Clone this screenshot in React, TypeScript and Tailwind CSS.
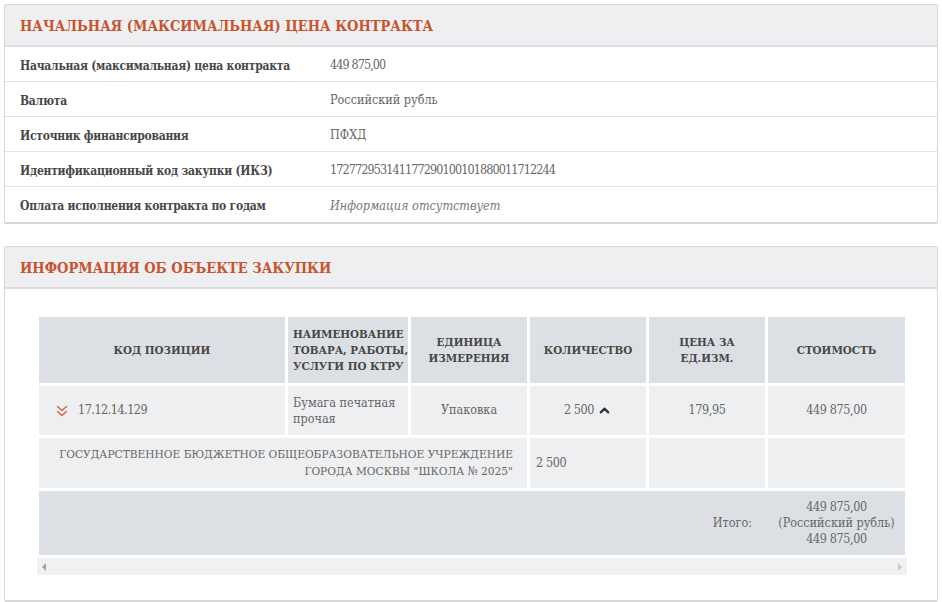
import { ChevronUp } from 'lucide-react';

const font = 'font-["DejaVu_Serif_Condensed","DejaVu_Serif",serif]';

const infoRows = [
  { label: 'Начальная (максимальная) цена контракта', value: '449 875,00', num: true },
  { label: 'Валюта', value: 'Российский рубль' },
  { label: 'Источник финансирования', value: 'ПФХД' },
  { label: 'Идентификационный код закупки (ИКЗ)', value: '172772953141177290100101880011712244', num: true },
  { label: 'Оплата исполнения контракта по годам', value: 'Информация отсутствует', muted: true }
];

function CardHeader({ title }: { title: string }) {
  return (
    <div className="flex h-[42px] items-center border-b-2 border-[#dcdde0] bg-[#eeeff1] px-[15px] pt-[2px]">
      <h2 className="text-[14.5px] font-bold uppercase text-[#c8542d]">{title}</h2>
    </div>
  );
}

function IconExpand() {
  return (
    <svg width="12" height="12" viewBox="0 0 12 12" aria-hidden="true">
      <path
        d="M1.5 1.5L6 5.5l4.5-4M1.5 6.5L6 10.5l4.5-4"
        stroke="#d0643c"
        strokeWidth="1.4"
        fill="none"
        strokeLinecap="round"
        strokeLinejoin="round"
      />
    </svg>
  );
}

const th = 'flex h-[66px] items-center justify-center whitespace-nowrap bg-[#dce0e4] text-center text-[11.5px] font-bold uppercase leading-[16px] text-[#474747]';
const td = 'flex items-center justify-center bg-[#eeeff1]';

export default function App() {
  return (
    <div className={`min-h-[602px] w-[942px] bg-white px-[4px] pt-[4px] text-[#555] ${font}`}>
      <section className="rounded-[2px] border border-b-2 border-[#d6d7d9]">
        <CardHeader title="Начальная (максимальная) цена контракта" />
        {infoRows.map((row, i) => (
          <div
            key={row.label}
            className={`flex h-[35px] items-center pt-[3px] text-[12.5px] ${i < infoRows.length - 1 ? 'border-b border-[#e2e3e5]' : ''}`}
          >
            <div className="w-[325px] pl-[15px] text-[12px] font-bold tracking-[-0.25px] text-[#474747]">{row.label}</div>
            <div
              className={
                row.muted
                  ? 'italic text-[#777]'
                  : row.num
                    ? 'tracking-[-0.9px] text-[#666]'
                    : 'text-[#666]'
              }
            >
              {row.value}
            </div>
          </div>
        ))}
      </section>

      <section className="mt-[22px] rounded-[2px] border border-b-2 border-[#d6d7d9] pb-[25px]">
        <CardHeader title="Информация об объекте закупки" />
        <div className="pl-[32px] pr-[32px] pt-[28px]">
          <div className="overflow-hidden">
            <div className="grid grid-cols-[246px_120px_116px_116px_116px_137px] gap-[3px] pl-[2px] text-[12.5px] text-[#666]">
              {/* header */}
              <div className={th}>Код позиции</div>
              <div className={`${th} justify-start px-[5px] text-left`}>
                <span>
                  Наименование
                  <br />
                  товара, работы,
                  <br />
                  услуги по КТРУ
                </span>
              </div>
              <div className={th}>
                <span>
                  Единица
                  <br />
                  измерения
                </span>
              </div>
              <div className={th}>Количество</div>
              <div className={th}>
                <span>
                  Цена за
                  <br />
                  ед.изм.
                </span>
              </div>
              <div className={th}>Стоимость</div>

              {/* row 1 */}
              <div className="flex h-[49px] items-center gap-[10px] bg-[#eeeff1] pl-[17px]">
                <IconExpand />
                <span className="tracking-[-0.5px]">17.12.14.129</span>
              </div>
              <div className="flex h-[49px] items-center bg-[#eeeff1] px-[5px] leading-[16px]">
                Бумага печатная прочая
              </div>
              <div className={`${td} h-[49px]`}>Упаковка</div>
              <div className={`${td} h-[49px] gap-[3px]`}>
                <span className="tracking-[-0.4px]">2 500</span>
                <ChevronUp size={15} strokeWidth={3.5} className="text-[#333]" />
              </div>
              <div className={`${td} h-[49px] tracking-[-0.4px]`}>179,95</div>
              <div className={`${td} h-[49px] tracking-[-0.4px]`}>449 875,00</div>

              {/* row 2 */}
              <div className="col-span-3 flex h-[50px] items-center justify-end whitespace-nowrap bg-[#eeeff1] px-[14px] text-right text-[11.8px] leading-[17px]">
                <span>
                  ГОСУДАРСТВЕННОЕ БЮДЖЕТНОЕ ОБЩЕОБРАЗОВАТЕЛЬНОЕ УЧРЕЖДЕНИЕ
                  <br />
                  ГОРОДА МОСКВЫ "ШКОЛА № 2025"
                </span>
              </div>
              <div className="flex h-[50px] items-center bg-[#eeeff1] px-[6px] tracking-[-0.4px]">2 500</div>
              <div className="h-[50px] bg-[#eeeff1]" />
              <div className="h-[50px] bg-[#eeeff1]" />

              {/* total */}
              <div className="col-span-6 flex h-[64px] items-center justify-end bg-[#dce0e4]">
                <span className="mr-[16px]">Итого:</span>
                <div className="w-[137px] text-center leading-[16px]">
                  <div className="tracking-[-0.4px]">449 875,00</div>
                  <div>(Российский рубль)</div>
                  <div className="tracking-[-0.4px]">449 875,00</div>
                </div>
              </div>
            </div>
          </div>
          <div className="mt-[3px] flex h-[17px] w-[870px] items-center justify-between bg-[#f1f1f1] px-[5px]">
            <span className="h-0 w-0 border-y-[4px] border-r-[4px] border-y-transparent border-r-[#a3a3a3]" />
            <span className="h-0 w-0 border-y-[4px] border-l-[4px] border-y-transparent border-l-[#c9c9c9]" />
          </div>
        </div>
      </section>
    </div>
  );
}
